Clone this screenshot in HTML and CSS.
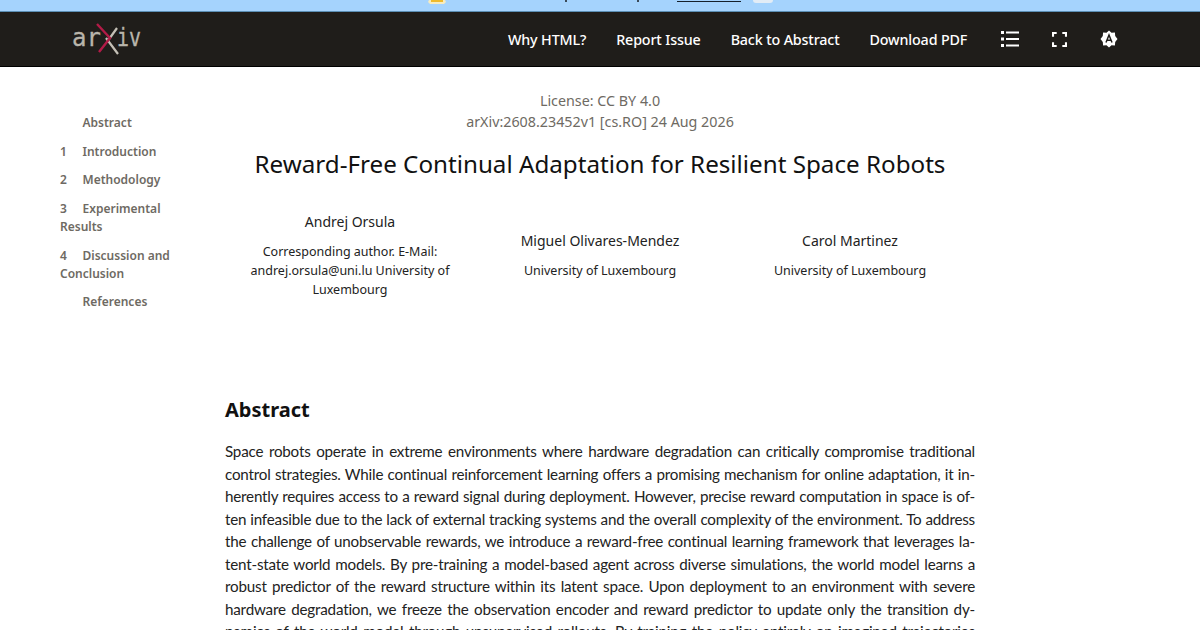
FILE: index.html
```html
<!DOCTYPE html>
<html lang="en">
<head>
  <meta charset="UTF-8">
  <title>Reward-Free Continual Adaptation for Resilient Space Robots</title>
  <link rel="stylesheet" href="styles.css">
</head>
<body>

<div class="banner">
  <svg class="banner-emoji" width="18" height="4" viewBox="0 0 18 4"><path d="M1 0h16l1 2-2 2H2L0 2z" fill="#f7ecc0"/><path d="M3 0h12v2H3z" fill="#eeba2c"/></svg>
  <span class="banner-tick tick-one"></span>
  <span class="banner-tick tick-two"></span>
  <span class="banner-link"></span>
  <span class="banner-btn"></span>
</div>

<header class="nav">
  <a class="logo">
    <svg width="72" height="34" viewBox="0 0 72 34">
      <text x="1" y="24" class="logo-text">ar</text>
      <text x="46" y="24" class="logo-text" textLength="24" lengthAdjust="spacingAndGlyphs">iv</text>
      <path d="M35 16L47 32M46 6L36 20" stroke="#c4c0b6" stroke-width="2.200" fill="none"/>
      <path d="M26 2L39 16L28 30" stroke="#b31b47" stroke-width="2.400" fill="none"/>
    </svg>
  </a>
  <nav class="nav-links">
    <a>Why HTML?</a>
    <a>Report Issue</a>
    <a>Back to Abstract</a>
    <a>Download PDF</a>
  </nav>
  <div class="nav-icons">
    <svg width="18" height="18" viewBox="0 0 18 18" fill="#fff"><path d="M0 1h3v3H0zM5 1.500h13v2H5zM0 7.500h3v3H0zM5 8h13v2H5zM0 14h3v3H0zM5 14.500h13v2H5z"/></svg>
    <svg width="15" height="15" viewBox="0 0 16 16" fill="none" stroke="#fff" stroke-width="2.400"><path d="M1 5V1h4M11 1h4v4M15 11v4h-4M5 15H1v-4"/></svg>
    <svg width="18" height="18" viewBox="0 0 18 18"><path fill="#fff" d="M9 .5l2.500 2.300 3.400-.2.300 3.300L17.500 9l-2.300 3.100-.3 3.300-3.400-.2L9 17.500l-2.500-2.300-3.400.2-.3-3.300L.5 9l2.300-3.100.3-3.300 3.400.2z"/><path d="M6 12.500L9 5l3 7.500M7 10.300h4" fill="none" stroke="#1f1d1a" stroke-width="1.500"/></svg>
  </div>
</header>

<div class="page">
  <aside class="toc">
    <a class="toc-item"><span class="toc-num"></span>Abstract</a>
    <a class="toc-item"><span class="toc-num">1</span>Introduction</a>
    <a class="toc-item"><span class="toc-num">2</span>Methodology</a>
    <a class="toc-item"><span class="toc-num">3</span>Experimental Results</a>
    <a class="toc-item"><span class="toc-num">4</span>Discussion and Conclusion</a>
    <a class="toc-item"><span class="toc-num"></span>References</a>
  </aside>

  <main class="article">
    <div class="license">License: CC BY 4.0</div>
    <div class="arxiv-id">arXiv:2608.23452v1 [cs.RO] 24 Aug 2026</div>
    <h1>Reward-Free Continual Adaptation for Resilient Space Robots</h1>

    <div class="authors">
      <div class="author">
        <div class="author-name">Andrej Orsula</div>
        <div class="author-note">Corresponding author. E-Mail: andrej.orsula@uni.lu University of Luxembourg</div>
      </div>
      <div class="author">
        <div class="author-name">Miguel Olivares-Mendez</div>
        <div class="author-note">University of Luxembourg</div>
      </div>
      <div class="author">
        <div class="author-name">Carol Martinez</div>
        <div class="author-note">University of Luxembourg</div>
      </div>
    </div>

    <h2>Abstract</h2>
    <p class="abstract">Space robots operate in extreme environments where hardware degradation can critically compromise traditional<br>
control strategies. While continual reinforcement learning offers a promising mechanism for online adaptation, it in-<br>
herently requires access to a reward signal during deployment. However, precise reward computation in space is of-<br>
ten infeasible due to the lack of external tracking systems and the overall complexity of the environment. To address<br>
the challenge of unobservable rewards, we introduce a reward-free continual learning framework that leverages la-<br>
tent-state world models. By pre-training a model-based agent across diverse simulations, the world model learns a<br>
robust predictor of the reward structure within its latent space. Upon deployment to an environment with severe<br>
hardware degradation, we freeze the observation encoder and reward predictor to update only the transition dy-<br>
namics of the world model through unsupervised rollouts. By training the policy entirely on imagined trajectories</p>
  </main>
</div>

</body>
</html>
```

FILE: styles.css
```css
* {
  box-sizing: border-box;
}
html, body {
  height: 630px;
  overflow: hidden;
}
body {
  margin: 0;
  background-color: #fff;
  color: #222;
  font-family: "Noto Sans", sans-serif;
}
a {
  color: inherit;
  text-decoration: none;
}

.banner {
  display: flex;
  align-items: flex-start;
  height: 12px;
  padding-left: 428px;
  background-color: #a5d3fd;
  border-bottom: 1px solid #5c8fb5;
}
.banner-emoji {
  flex: none;
}
.banner-tick {
  width: 2px;
  height: 2px;
  background-color: #3a4a58;
}
.tick-one {
  margin-left: 119px;
}
.tick-two {
  margin-left: 70px;
}
.banner-link {
  width: 64px;
  height: 2px;
  margin-left: 38px;
  border-bottom: 1px solid #14202c;
}
.banner-btn {
  width: 20px;
  height: 3px;
  margin-left: 12px;
  background-color: #e2ecf6;
  border-radius: 0 0 3px 3px;
}

.nav {
  display: flex;
  align-items: center;
  height: 55px;
  padding-left: 71px;
  background-color: #1f1d1a;
  border-bottom: 1px solid #000;
  color: #fff;
}
.logo {
  display: flex;
  width: 72px;
}
.logo-text {
  font-family: "DejaVu Sans Mono", monospace;
  font-size: 24px;
  fill: #b9b5ab;
  stroke: #b9b5ab;
  stroke-width: 0.3px;
}
.nav-links {
  display: flex;
  gap: 30px;
  margin-left: 365px;
  font-size: 14.300px;
  font-weight: 500;
  letter-spacing: -0.15px;
}
.nav-icons {
  display: flex;
  align-items: center;
  gap: 33px;
  margin-left: 34px;
}

.page {
  display: flex;
}
.toc {
  flex: none;
  width: 225px;
  padding: 47px 40px 0 60px;
  font-size: 12px;
  font-weight: 600;
  line-height: 18px;
  color: #6e6a63;
}
.toc-item {
  display: block;
  margin-bottom: 10.700px;
}
.toc-num {
  display: inline-block;
  width: 22.500px;
}

.article {
  width: 750px;
}
.license, .arxiv-id {
  text-align: center;
  color: #6e6a63;
  font-size: 14.300px;
  line-height: 21px;
}
.license {
  margin-top: 23px;
}
h1 {
  margin: 15px 0 0;
  text-align: center;
  font-size: 24.200px;
  font-weight: 400;
  line-height: 34px;
  color: #111;
}
.authors {
  display: flex;
  justify-content: center;
  align-items: center;
  margin-top: 30px;
  text-align: center;
  color: #222;
}
.author {
  flex: none;
  width: 204px;
  margin: 0 23px;
}
.author-name {
  font-size: 14px;
  line-height: 22px;
  margin-bottom: 9px;
}
.author-note {
  font-size: 12.500px;
  line-height: 19px;
}
h2 {
  margin: 97px 0 0;
  font-size: 20px;
  font-weight: 700;
  line-height: 28px;
  color: #111;
}
.abstract {
  margin: 16px 0 0;
  font-family: Lato, sans-serif;
  font-size: 15.200px;
  letter-spacing: -0.2px;
  line-height: 22.500px;
  text-align: justify;
  text-align-last: justify;
  white-space: nowrap;
  color: #222;
}
```
